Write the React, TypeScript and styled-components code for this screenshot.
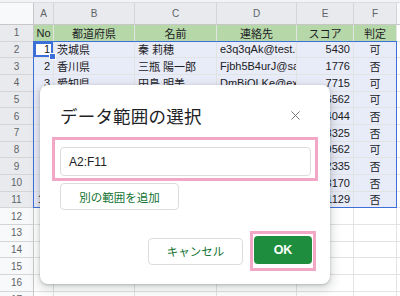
import React from "react";
import styled, { createGlobalStyle, css } from "styled-components";
import { X } from "lucide-react";

const GlobalStyle = createGlobalStyle`
  html, body {
    margin: 0;
    padding: 0;
    background: #ffffff;
    overflow: hidden;
  }
  body {
    font-family: "Liberation Sans", "Noto Sans CJK JP", sans-serif;
  }
`;

const BLUE = "#3d6fd9";
const GREEN = "#137333";
const PINK = "#f2a7c7";

type Align = "left" | "right" | "center";
type Fill = "header" | "sel" | "none";

const Sheet = styled.div`
  position: relative;
  width: 400px;
  height: 296px;
  overflow: hidden;
  background: #fff;
`;

const TopStrip = styled.div`
  height: 3px;
  background: #f1f3f4;
  border-bottom: 1px solid #dadce0;
  box-sizing: border-box;
`;

const Grid = styled.div`
  position: relative;
  display: grid;
  grid-template-columns: 34px 20px 81px 82px 80px 57px 43px 1fr;
  grid-template-rows: 22px repeat(17, 16.67px);
`;

const Corner = styled.div`
  background: #f8f9fa;
  border-right: 1px solid #c7c7c7;
  border-bottom: 1px solid #c7c7c7;
`;

const ColHead = styled.div<{ $active?: boolean }>`
  display: flex;
  align-items: center;
  justify-content: center;
  font-size: 10px;
  color: #5f6368;
  background: ${(p) => (p.$active ? "#e8eaed" : "#f8f9fa")};
  border-right: 1px solid #d5d5d5;
  border-bottom: 1px solid #c7c7c7;
`;

const RowHead = styled.div<{ $active?: boolean }>`
  display: flex;
  align-items: center;
  justify-content: center;
  font-size: 10px;
  color: #5f6368;
  background: ${(p) => (p.$active ? "#e8eaed" : "#f8f9fa")};
  border-right: 1px solid #c7c7c7;
  border-bottom: 1px solid #d5d5d5;
`;

const Cell = styled.div<{ $align: Align; $fill: Fill; $active?: boolean }>`
  position: relative;
  display: flex;
  align-items: center;
  justify-content: ${(p) =>
    p.$align === "left" ? "flex-start" : p.$align === "right" ? "flex-end" : "center"};
  padding: 0 3px;
  font-size: 11px;
  color: #202124;
  white-space: nowrap;
  overflow: hidden;
  border-right: 1px solid #e2e3e3;
  border-bottom: 1px solid #e2e3e3;
  background: ${(p) =>
    p.$fill === "header" ? "#b6d7a8" : p.$fill === "sel" ? "#e8ebf8" : "#ffffff"};
  ${(p) =>
    p.$active &&
    css`
      overflow: visible;
      box-shadow: inset 0 0 0 2px ${BLUE};
      background: #fff;
    `}
`;

const FillHandle = styled.span`
  position: absolute;
  right: -3px;
  bottom: -3px;
  width: 5px;
  height: 5px;
  background: ${BLUE};
  border: 1px solid #fff;
  z-index: 2;
`;

const Selection = styled.div`
  position: absolute;
  inset: 0;
  grid-area: 3 / 2 / 13 / 8;
  border: 1px solid ${BLUE};
  margin: -1px 0 0 -1px;
  pointer-events: none;
`;

const Dialog = styled.div`
  position: absolute;
  left: 40px;
  top: 85px;
  width: 290px;
  height: 199px;
  box-sizing: border-box;
  padding: 0 12px;
  background: #fff;
  border-radius: 8px;
  box-shadow: 0 1px 3px rgba(60, 64, 67, 0.3), 0 4px 10px 3px rgba(60, 64, 67, 0.15);
  display: flex;
  flex-direction: column;
  font-family: "Noto Sans CJK JP", "Liberation Sans", sans-serif;
`;

const TitleRow = styled.div`
  display: flex;
  align-items: center;
  justify-content: space-between;
  height: 24px;
  margin: 18px 15px 10px 8px;
`;

const Title = styled.h2`
  margin: 0;
  font-size: 17.5px;
  font-weight: 400;
  color: #202124;
  letter-spacing: 0.2px;
`;

const CloseButton = styled.span`
  display: flex;
  color: #5f6368;
`;

const Highlight = styled.div<{ $pad: string }>`
  border: 3px solid ${PINK};
  padding: ${(p) => p.$pad};
`;

const RangeInput = styled.div`
  height: 29px;
  box-sizing: border-box;
  border: 1px solid #dadce0;
  border-radius: 4px;
  display: flex;
  align-items: center;
  padding-left: 8px;
  font-family: "Liberation Sans", "Noto Sans CJK JP", sans-serif;
  font-size: 12px;
  color: #202124;
`;

const OutlineButton = styled.div<{ $width: number }>`
  width: ${(p) => p.$width}px;
  height: 27px;
  box-sizing: border-box;
  border: 1px solid #dadce0;
  border-radius: 4px;
  display: flex;
  align-items: center;
  justify-content: center;
  font-size: 11.5px;
  color: ${GREEN};
`;

const AddRow = styled.div`
  margin: 2px 0 0 8px;
`;

const Footer = styled.div`
  display: flex;
  align-items: center;
  justify-content: flex-end;
  gap: 7px;
  margin: 21px 2px 0 0;
`;

const PrimaryButton = styled.div`
  width: 58px;
  height: 28px;
  border-radius: 4px;
  background: #1e8e3e;
  display: flex;
  align-items: center;
  justify-content: center;
  color: #fff;
  font-family: "Liberation Sans", sans-serif;
  font-weight: 700;
  font-size: 12.5px;
`;

const columns = ["A", "B", "C", "D", "E", "F", ""];
const aligns: Align[] = ["right", "left", "left", "left", "right", "center", "left"];

const data: string[][] = [
  ["No", "都道府県", "名前", "連絡先", "スコア", "判定"],
  ["1", "茨城県", "秦 莉穂", "e3q3qAk@test.net", "5430", "可"],
  ["2", "香川県", "三瓶 陽一郎", "Fjbh5B4urJ@sample.jp", "1776", "否"],
  ["3", "愛知県", "田島 明美", "DmBjOLKe@example.com", "7715", "可"],
  ["4", "福岡県", "松井 真司", "kT9wQp2L@test.net", "6562", "可"],
  ["5", "大阪府", "岩田 菜々", "Zr8uVx1N@sample.jp", "4044", "否"],
  ["6", "静岡県", "小野 健", "Pm4sYt7H@example.com", "8325", "否"],
  ["7", "宮城県", "高木 彩花", "Lw2eRq5B@test.net", "9562", "可"],
  ["8", "広島県", "森 大輔", "Hq6nCz3K@sample.jp", "2335", "否"],
  ["9", "長野県", "加藤 美咲", "Xy1oJt8D@example.com", "3170", "否"],
  ["10", "新潟県", "佐野 翔太", "Bv5kMw9F@test.net", "1129", "否"],
];

const TOTAL_ROWS = 17;

const App: React.FC = () => {
  return (
    <>
      <GlobalStyle />
      <Sheet>
        <TopStrip />
        <Grid>
          <Corner />
          {columns.map((c, i) => (
            <ColHead key={i} $active={i < 6}>
              {c}
            </ColHead>
          ))}
          {Array.from({ length: TOTAL_ROWS }).map((_, r) => (
            <React.Fragment key={r}>
              <RowHead $active={r < 11}>{r + 1}</RowHead>
              {columns.map((_c, ci) => {
                const row = data[r];
                const text = row && ci < 6 ? row[ci] : "";
                const header = r === 0 && ci < 6;
                const sel = r >= 1 && r <= 10 && ci < 6;
                const active = r === 1 && ci === 0;
                return (
                  <Cell
                    key={ci}
                    $align={header ? "center" : aligns[ci]}
                    $fill={header ? "header" : sel ? "sel" : "none"}
                    $active={active}
                  >
                    {text}
                    {active && <FillHandle />}
                  </Cell>
                );
              })}
            </React.Fragment>
          ))}
          <Selection />
        </Grid>

        <Dialog>
          <TitleRow>
            <Title>データ範囲の選択</Title>
            <CloseButton>
              <X size={15} strokeWidth={1.4} />
            </CloseButton>
          </TitleRow>
          <Highlight $pad="7px 4px 2px 5px">
            <RangeInput>A2:F11</RangeInput>
          </Highlight>
          <AddRow>
            <OutlineButton $width={119}>別の範囲を追加</OutlineButton>
          </AddRow>
          <Footer>
            <OutlineButton $width={95}>キャンセル</OutlineButton>
            <Highlight $pad="2px 1px 4px 1px">
              <PrimaryButton>OK</PrimaryButton>
            </Highlight>
          </Footer>
        </Dialog>
      </Sheet>
    </>
  );
};

export default App;
